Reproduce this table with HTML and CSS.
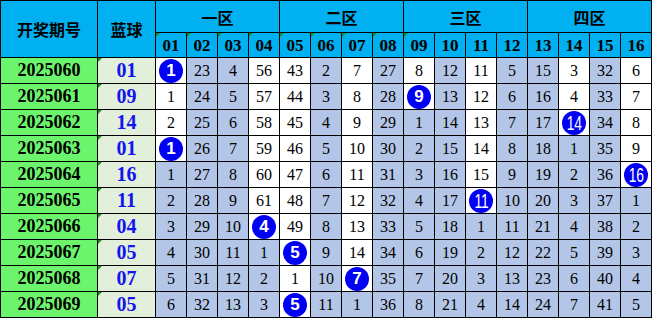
FILE: index.html
```html
<!DOCTYPE html>
<html lang="zh">
<head>
<meta charset="utf-8">
<title>蓝球分区走势</title>
<link rel="stylesheet" href="styles.css">
</head>
<body>
<div class="chart">
  <div class="hd hd-big span2">开奖期号</div>
  <div class="hd hd-big span2">蓝球</div>
  <div class="hd zone">一区</div>
  <div class="hd zone">二区</div>
  <div class="hd zone">三区</div>
  <div class="hd zone">四区</div>
  <div class="hd num tri">01</div><div class="hd num tri">02</div><div class="hd num tri">03</div><div class="hd num tri">04</div>
  <div class="hd num tri">05</div><div class="hd num tri">06</div><div class="hd num tri">07</div><div class="hd num tri">08</div>
  <div class="hd num tri">09</div><div class="hd num">10</div><div class="hd num">11</div><div class="hd num">12</div>
  <div class="hd num">13</div><div class="hd num">14</div><div class="hd num">15</div><div class="hd num">16</div>

  <div class="per">2025060</div><div class="blue tri">01</div>
  <div class="c w"><span class="ball">1</span></div><div class="c">23</div><div class="c">4</div><div class="c w">56</div><div class="c w">43</div><div class="c">2</div><div class="c w">7</div><div class="c">27</div><div class="c w">8</div><div class="c">12</div><div class="c w">11</div><div class="c">5</div><div class="c">15</div><div class="c w">3</div><div class="c">32</div><div class="c w">6</div>

  <div class="per">2025061</div><div class="blue tri">09</div>
  <div class="c w">1</div><div class="c">24</div><div class="c">5</div><div class="c w">57</div><div class="c w">44</div><div class="c">3</div><div class="c w">8</div><div class="c">28</div><div class="c w"><span class="ball">9</span></div><div class="c">13</div><div class="c w">12</div><div class="c">6</div><div class="c">16</div><div class="c w">4</div><div class="c">33</div><div class="c w">7</div>

  <div class="per">2025062</div><div class="blue tri">14</div>
  <div class="c w">2</div><div class="c">25</div><div class="c">6</div><div class="c w">58</div><div class="c w">45</div><div class="c">4</div><div class="c w">9</div><div class="c">29</div><div class="c">1</div><div class="c">14</div><div class="c w">13</div><div class="c">7</div><div class="c">17</div><div class="c w"><span class="ball n2"><span>14</span></span></div><div class="c">34</div><div class="c w">8</div>

  <div class="per">2025063</div><div class="blue tri">01</div>
  <div class="c w"><span class="ball">1</span></div><div class="c">26</div><div class="c">7</div><div class="c w">59</div><div class="c w">46</div><div class="c">5</div><div class="c w">10</div><div class="c">30</div><div class="c">2</div><div class="c">15</div><div class="c w">14</div><div class="c">8</div><div class="c">18</div><div class="c">1</div><div class="c">35</div><div class="c w">9</div>

  <div class="per">2025064</div><div class="blue tri">16</div>
  <div class="c">1</div><div class="c">27</div><div class="c">8</div><div class="c w">60</div><div class="c w">47</div><div class="c">6</div><div class="c w">11</div><div class="c">31</div><div class="c">3</div><div class="c">16</div><div class="c w">15</div><div class="c">9</div><div class="c">19</div><div class="c">2</div><div class="c">36</div><div class="c w"><span class="ball n2"><span>16</span></span></div>

  <div class="per">2025065</div><div class="blue tri">11</div>
  <div class="c">2</div><div class="c">28</div><div class="c">9</div><div class="c w">61</div><div class="c w">48</div><div class="c">7</div><div class="c w">12</div><div class="c">32</div><div class="c">4</div><div class="c">17</div><div class="c w"><span class="ball n2"><span>11</span></span></div><div class="c">10</div><div class="c">20</div><div class="c">3</div><div class="c">37</div><div class="c">1</div>

  <div class="per">2025066</div><div class="blue tri">04</div>
  <div class="c">3</div><div class="c">29</div><div class="c">10</div><div class="c w"><span class="ball">4</span></div><div class="c w">49</div><div class="c">8</div><div class="c w">13</div><div class="c">33</div><div class="c">5</div><div class="c">18</div><div class="c">1</div><div class="c">11</div><div class="c">21</div><div class="c">4</div><div class="c">38</div><div class="c">2</div>

  <div class="per">2025067</div><div class="blue tri">05</div>
  <div class="c">4</div><div class="c">30</div><div class="c">11</div><div class="c">1</div><div class="c w"><span class="ball">5</span></div><div class="c">9</div><div class="c w">14</div><div class="c">34</div><div class="c">6</div><div class="c">19</div><div class="c">2</div><div class="c">12</div><div class="c">22</div><div class="c">5</div><div class="c">39</div><div class="c">3</div>

  <div class="per">2025068</div><div class="blue tri">07</div>
  <div class="c">5</div><div class="c">31</div><div class="c">12</div><div class="c">2</div><div class="c w">1</div><div class="c">10</div><div class="c w"><span class="ball">7</span></div><div class="c">35</div><div class="c">7</div><div class="c">20</div><div class="c">3</div><div class="c">13</div><div class="c">23</div><div class="c">6</div><div class="c">40</div><div class="c">4</div>

  <div class="per">2025069</div><div class="blue tri">05</div>
  <div class="c">6</div><div class="c">32</div><div class="c">13</div><div class="c">3</div><div class="c w"><span class="ball">5</span></div><div class="c">11</div><div class="c">1</div><div class="c">36</div><div class="c">8</div><div class="c">21</div><div class="c">4</div><div class="c">14</div><div class="c">24</div><div class="c">7</div><div class="c">41</div><div class="c">5</div>
</div>
</body>
</html>
```

FILE: styles.css
```css
html, body {
  margin: 0;
  padding: 0;
  background: #fff;
}

.chart {
  display: grid;
  grid-template-columns: 96px 57px repeat(16, 30px);
  grid-template-rows: 31px 24px repeat(10, 25px);
  gap: 1px;
  padding: 1px;
  background: #000;
  width: max-content;
}

.chart > div {
  position: relative;
  display: flex;
  align-items: center;
  justify-content: center;
  overflow: hidden;
}

.hd {
  background: #00b0f0;
  color: #000;
  font-weight: bold;
}

.hd-big,
.zone {
  font-family: "Noto Sans CJK SC", "Noto Sans", sans-serif;
  font-size: 16px;
  font-weight: 700;
}

.span2 {
  grid-row: span 2;
}

.zone {
  grid-column: span 4;
}

.num {
  font-family: "Liberation Serif", serif;
  font-size: 17px;
  padding-top: 2px;
}

.tri::before {
  content: "";
  position: absolute;
  top: 0;
  left: 0;
  border-top: 4px solid #1f8f1f;
  border-right: 4px solid transparent;
}

.per {
  background: #6cf46c;
  font-family: "Liberation Serif", serif;
  font-weight: bold;
  font-size: 18px;
  color: #000;
}

.blue {
  background: #e2efda;
  font-family: "Liberation Serif", serif;
  font-weight: bold;
  font-size: 20px;
  color: #1414ee;
}

.c {
  background: #b4c6e7;
  font-family: "Liberation Serif", serif;
  font-size: 16px;
  color: #000;
}

.c.w {
  background: #fff;
}

.ball {
  width: 24px;
  height: 24px;
  border-radius: 50%;
  background: #0000f5;
  color: #fff;
  font-family: "Liberation Sans", sans-serif;
  font-weight: bold;
  font-size: 17px;
  display: flex;
  align-items: center;
  justify-content: center;
}

.ball.n2 {
  font-weight: normal;
  font-size: 21px;
}

.ball.n2 span {
  display: inline-block;
  transform: scaleX(0.66);
  letter-spacing: -0.5px;
}
```
